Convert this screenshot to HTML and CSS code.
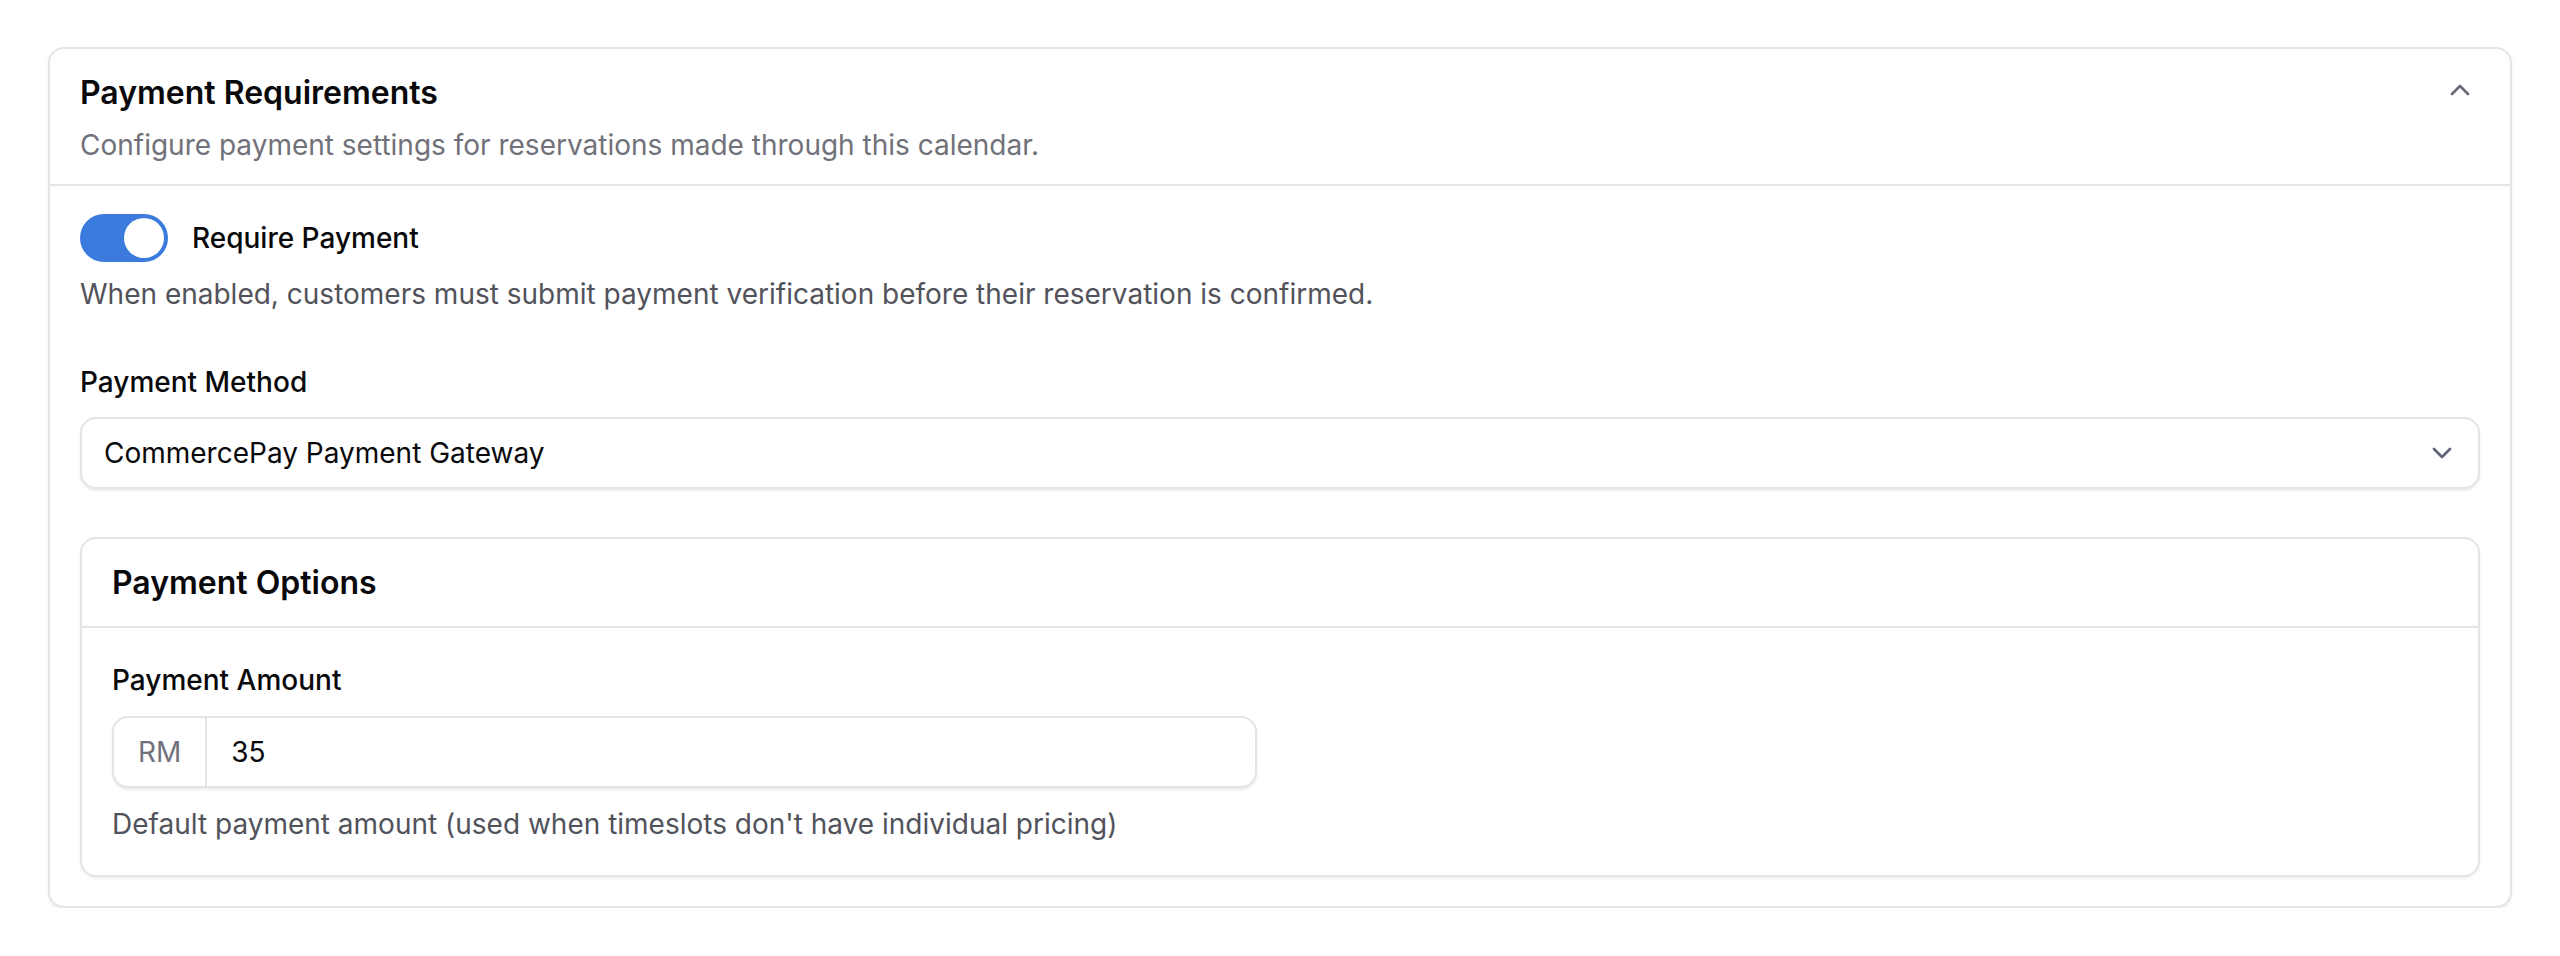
FILE: index.html
```html
<!DOCTYPE html>
<html lang="en">
<head>
<meta charset="utf-8">
<title>Payment Requirements</title>
<link rel="stylesheet" href="styles.css">
</head>
<body>
  <section class="card">
    <header class="card-header">
      <div class="header-text">
        <h2 class="card-title">Payment Requirements</h2>
        <p class="card-desc">Configure payment settings for reservations made through this calendar.</p>
      </div>
      <span class="collapse-icon">
        <svg viewBox="0 0 24 24" width="32" height="32" fill="none" stroke="currentColor" stroke-width="2" stroke-linecap="round" stroke-linejoin="round"><path d="m18 15-6-6-6 6"/></svg>
      </span>
    </header>
    <div class="card-body">
      <div class="switch-row">
        <span class="switch"><span class="knob"></span></span>
        <span class="switch-label">Require Payment</span>
      </div>
      <p class="help">When enabled, customers must submit payment verification before their reservation is confirmed.</p>

      <div class="field">
        <div class="label">Payment Method</div>
        <div class="select">
          <span class="select-value">CommercePay Payment Gateway</span>
          <svg class="select-icon" viewBox="0 0 24 24" width="32" height="32" fill="none" stroke="currentColor" stroke-width="2" stroke-linecap="round" stroke-linejoin="round"><path d="m6 9 6 6 6-6"/></svg>
        </div>
      </div>

      <section class="sub-card">
        <header class="sub-header">
          <h3 class="sub-title">Payment Options</h3>
        </header>
        <div class="sub-body">
          <div class="label">Payment Amount</div>
          <div class="input-group">
            <span class="prefix">RM</span>
            <span class="input-value">35</span>
          </div>
          <p class="help help-small">Default payment amount (used when timeslots don't have individual pricing)</p>
        </div>
      </section>
    </div>
  </section>
</body>
</html>
```
FILE: styles.css
```css
* {
  box-sizing: border-box;
  margin: 0;
  padding: 0;
}

html, body {
  background: #ffffff;
}

body {
  font-family: Inter, "Noto Sans", sans-serif;
  color: #09090b;
  padding: 47px 48px 0 48px;
  -webkit-font-smoothing: antialiased;
}

.card {
  border: 2px solid #e4e4e7;
  border-radius: 16px;
  background: #ffffff;
  box-shadow: 0 2px 4px rgba(0, 0, 0, 0.06);
}

.card-header {
  display: flex;
  justify-content: space-between;
  align-items: flex-start;
  padding: 20px 30px 19px 30px;
  border-bottom: 2px solid #e4e4e7;
}

.card-title {
  font-size: 32px;
  line-height: 48px;
  font-weight: 600;
  color: #09090b;
}

.card-desc {
  margin-top: 8px;
  font-size: 28px;
  line-height: 40px;
  color: #71717a;
}

.collapse-icon {
  display: flex;
  width: 32px;
  height: 32px;
  margin-top: 5px;
  margin-right: 4px;
  color: #6b6b78;
}

.card-body {
  padding: 28px 30px 29px 30px;
}

.switch-row {
  display: flex;
  align-items: center;
  gap: 24px;
  height: 48px;
}

.switch {
  display: flex;
  justify-content: flex-end;
  align-items: center;
  width: 88px;
  height: 48px;
  padding: 4px;
  border-radius: 24px;
  background: #3b7bde;
}

.knob {
  width: 40px;
  height: 40px;
  border-radius: 50%;
  background: #ffffff;
}

.switch-label {
  font-size: 28px;
  line-height: 40px;
  font-weight: 500;
}

.help {
  margin-top: 12px;
  font-size: 28px;
  line-height: 40px;
  color: #52525b;
}

.field {
  margin-top: 48px;
}

.label {
  font-size: 28px;
  line-height: 40px;
  font-weight: 500;
  color: #09090b;
}

.select {
  display: flex;
  align-items: center;
  justify-content: space-between;
  margin-top: 15px;
  height: 72px;
  padding: 0 20px 0 22px;
  border: 2px solid #e4e4e7;
  border-radius: 16px;
  background: #ffffff;
  box-shadow: 0 2px 3px rgba(0, 0, 0, 0.08);
}

.select-value {
  font-size: 28px;
  line-height: 40px;
  color: #09090b;
}

.select-icon {
  color: #5f6577;
}

.sub-card {
  margin-top: 48px;
  border: 2px solid #e4e4e7;
  border-radius: 16px;
  background: #ffffff;
  box-shadow: 0 2px 4px rgba(0, 0, 0, 0.05);
}

.sub-header {
  padding: 20px 30px 19px 30px;
  border-bottom: 2px solid #e4e4e7;
}

.sub-title {
  font-size: 32px;
  line-height: 48px;
  font-weight: 600;
  color: #09090b;
}

.sub-body {
  padding: 32px 30px 31px 30px;
}

.input-group {
  display: flex;
  align-items: stretch;
  width: 1145px;
  height: 72px;
  margin-top: 16px;
  border: 2px solid #e4e4e7;
  border-radius: 16px;
  background: #ffffff;
  box-shadow: 0 2px 3px rgba(0, 0, 0, 0.08);
  overflow: hidden;
}

.prefix {
  display: flex;
  align-items: center;
  padding: 0 24px;
  border-right: 2px solid #e4e4e7;
  font-size: 28px;
  line-height: 40px;
  color: #71717a;
}

.input-value {
  display: flex;
  align-items: center;
  padding: 0 24px;
  font-size: 28px;
  line-height: 40px;
  color: #09090b;
}

.help-small {
  margin-top: 16px;
}
```
